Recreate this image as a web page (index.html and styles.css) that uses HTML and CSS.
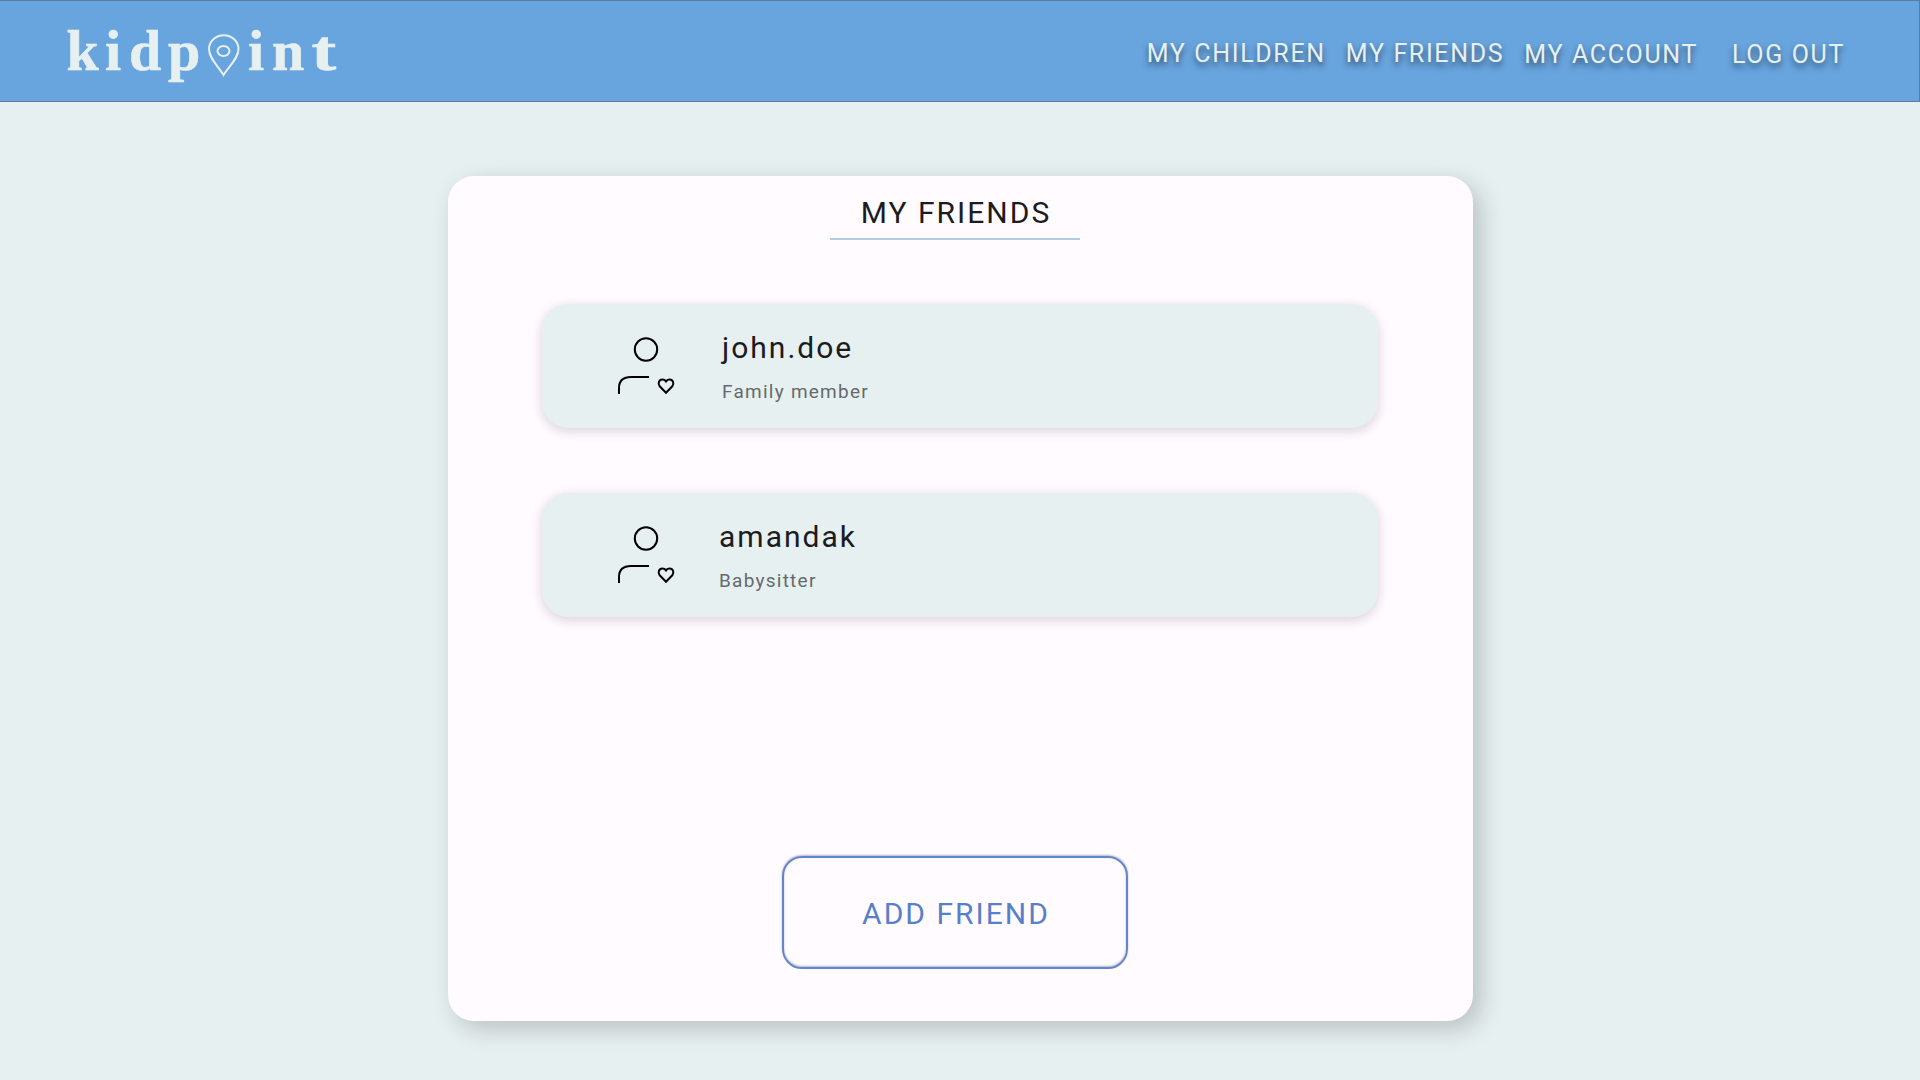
FILE: index.html
```html
<!DOCTYPE html>
<html lang="en">
<head>
<meta charset="utf-8">
<title>kidpoint</title>
<link rel="stylesheet" href="styles.css">
</head>
<body>
<svg class="sprite" aria-hidden="true">
  <symbol id="friend" viewBox="0 0 60 60">
    <circle cx="30" cy="13.5" r="11.2"/>
    <path d="M3 58V52Q3 41 15 41H33"/>
    <path d="M50 56.700L43.700 50.300C41.500 47.500 43 43.500 46.300 43.500Q48.700 43.500 50 45.400Q51.300 43.500 53.700 43.500C57 43.500 58.500 47.500 56.300 50.300Z"/>
  </symbol>
</svg>
<header class="header">
  <svg class="logo" viewBox="0 0 280 60" role="img" aria-label="kidpoint">
    <text y="46" x="1.500 40 64 103">kidp</text>
    <text y="46" x="183 207">in</text>
    <text y="46" x="192.500" transform="scale(1.28 1)">t</text>
    <path d="M158.500 51C153.500 42.500 144 34.500 144 25A14.700 13.800 0 0 1 173.500 25C173.500 34.500 163.500 42.500 158.500 51Z"/>
    <ellipse cx="158.500" cy="27" rx="6" ry="5"/>
  </svg>
  <nav class="nav">
    <a class="link">MY CHILDREN</a>
    <a class="link">MY FRIENDS</a>
    <a class="link link-low">MY ACCOUNT</a>
    <a class="link link-low link-out">LOG OUT</a>
  </nav>
</header>
<main class="card">
  <h1 class="title">MY FRIENDS</h1>
  <section class="list">
    <article class="friend">
      <svg class="icon"><use href="#friend"/></svg>
      <div class="info"><div class="name">john.doe</div><div class="role">Family member</div></div>
    </article>
    <article class="friend">
      <svg class="icon"><use href="#friend"/></svg>
      <div class="info info-near"><div class="name">amandak</div><div class="role">Babysitter</div></div>
    </article>
  </section>
  <button class="add">ADD FRIEND</button>
</main>
</body>
</html>
```
FILE: styles.css
```css
* { box-sizing: border-box; }
body {
  margin: 0;
  height: 1080px;
  overflow: hidden;
  background: #e7f0f1;
  font-family: Roboto, "Liberation Sans", sans-serif;
  color: #1b1b20;
}
.sprite { display: none; }
.header {
  display: flex;
  justify-content: space-between;
  height: 102px;
  padding: 23px 74px 0 65px;
  background: #68a4de;
  border: 1px solid #5d7c9c;
  border-left: 0;
}
.logo {
  width: 280px;
  height: 60px;
  overflow: visible;
  font: bold 58px "Liberation Serif", serif;
  fill: #e7f0f1;
}
.logo text { stroke: #e7f0f1; stroke-width: .6; }
.logo path, .logo ellipse { fill: none; stroke: #e7f0f1; stroke-width: 2; }
.nav { display: flex; gap: 20px; padding-top: 15px; }
.link {
  font-size: 25px;
  line-height: 30px;
  letter-spacing: 1.65px;
  color: #e7f0f1;
  text-shadow: 0 4px 6px rgba(0, 0, 0, .55);
  white-space: nowrap;
}
.link-low { padding-top: 1px; }
.link-out { margin-left: 14px; }
.card {
  display: flex;
  flex-direction: column;
  width: 1025px;
  height: 845px;
  margin: 74px 0 0 448px;
  background: #fffbff;
  border-radius: 26px;
  box-shadow: 8px 8px 25px rgba(0, 0, 0, .2);
}
.title {
  width: 250px;
  height: 64px;
  margin: 0 0 0 382px;
  padding: 19px 0 0 2px;
  border-bottom: 2px solid #b0cce6;
  font-size: 30px;
  font-weight: 400;
  line-height: 36px;
  letter-spacing: 2px;
  text-align: center;
}
.list { display: flex; flex-direction: column; gap: 65px; padding: 64px 95px 0 94px; }
.friend {
  display: flex;
  height: 124px;
  padding: 24px 0 0 74px;
  background: #e7f0f1;
  border-radius: 26px;
  box-shadow: 0 3px 12px rgba(50, 20, 40, .18);
}
.icon { width: 60px; height: 60px; margin-top: 8px; fill: none; stroke: #000; stroke-width: 2; }
.info { margin-left: 46px; }
.info-near { margin-left: 43px; }
.name { font-size: 30px; line-height: 36px; letter-spacing: 2px; margin-top: 2px; }
.role { font-size: 19px; line-height: 24px; letter-spacing: 1.25px; margin-top: 14px; color: #65696c; }
.add {
  width: 346px;
  height: 113px;
  margin: 239px 0 0 334px;
  padding: 2px 0 0 2px;
  background: transparent;
  border: 2px solid #6485cb;
  border-radius: 20px;
  box-shadow: 0 -1px 2px rgba(70, 80, 120, .4), inset 0 -1px 2px rgba(70, 80, 120, .4);
  color: #5880ca;
  font: 30px Roboto, "Liberation Sans", sans-serif;
  letter-spacing: 2px;
}
```
